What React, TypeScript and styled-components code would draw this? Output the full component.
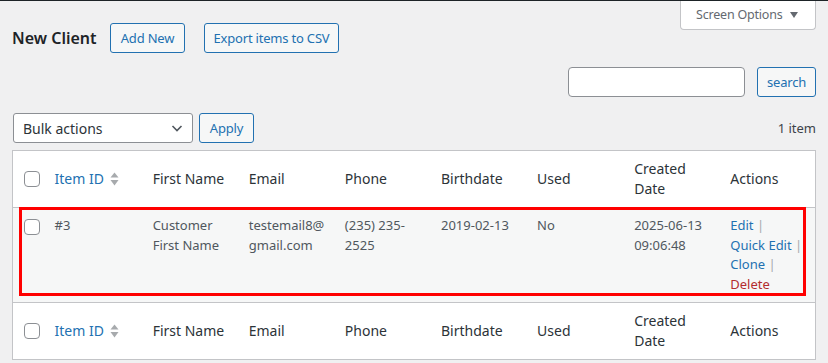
import React from "react";
import styled, { createGlobalStyle } from "styled-components";

const GlobalStyle = createGlobalStyle`
  html, body {
    margin: 0;
    padding: 0;
    background: #f0f0f1;
  }
  body {
    font-family: "Noto Sans", "Open Sans", sans-serif;
    font-size: 13px;
    color: #3c434a;
  }
`;

const TopEdge = styled.div`
  height: 1px;
  background: #1d2327;
`;

const Wrap = styled.div`
  padding: 0 12px;
`;

const HeaderRow = styled.div`
  display: flex;
  justify-content: space-between;
  align-items: flex-start;
`;

const TitleGroup = styled.div`
  display: flex;
  align-items: center;
  margin-top: 22px;
`;

const Title = styled.h1`
  width: 98px;
  margin: 0;
  font-size: 16px;
  font-weight: 600;
  color: #1d2327;
`;

const Button = styled.button<{ $gap?: number; $w: number }>`
  box-sizing: border-box;
  width: ${p => p.$w}px;
  height: 30px;
  margin-left: ${p => p.$gap || 0}px;
  padding: 0;
  border: 1px solid #2271b1;
  border-radius: 3px;
  background: #f6f7f7;
  color: #2271b1;
  font-family: inherit;
  font-size: 13px;
  line-height: 28px;
  letter-spacing: -0.2px;
  text-align: center;
  white-space: nowrap;
`;

const ScreenOptions = styled.div`
  box-sizing: border-box;
  display: flex;
  align-items: center;
  gap: 7px;
  width: 136px;
  height: 29px;
  padding: 0 0 2px 15px;
  background: #fff;
  border: 1px solid #c3c4c7;
  border-top: none;
  border-radius: 0 0 4px 4px;
  color: #646970;
  font-size: 12.5px;
  letter-spacing: -0.2px;
`;

const Caret = styled.span`
  width: 0;
  height: 0;
  border-left: 4px solid transparent;
  border-right: 4px solid transparent;
  border-top: 6px solid #646970;
  margin-top: 1px;
`;

const SearchRow = styled.div`
  display: flex;
  justify-content: flex-end;
  gap: 12px;
  margin-top: 14px;
`;

const SearchInput = styled.input`
  box-sizing: border-box;
  width: 177px;
  height: 30px;
  border: 1px solid #8c8f94;
  border-radius: 4px;
  background: #fff;
`;

const Tablenav = styled.div`
  display: flex;
  align-items: center;
  margin-top: 16px;
  margin-left: 1px;
`;

const Select = styled.div`
  box-sizing: border-box;
  display: flex;
  align-items: center;
  justify-content: space-between;
  width: 180px;
  height: 30px;
  padding: 0 8px 0 9px;
  border: 1px solid #8c8f94;
  border-radius: 3px;
  background: #fff;
  color: #2c3338;
  font-size: 14px;
`;

const Count = styled.span`
  margin-left: auto;
  color: #3c434a;
  font-size: 13px;
`;

const TableBox = styled.div`
  position: relative;
  margin-top: 7px;
`;

const Table = styled.table`
  width: 100%;
  table-layout: fixed;
  border-collapse: collapse;
  border: 1px solid #c3c4c7;
  background: #fff;
`;

const Th = styled.th<{ $link?: boolean }>`
  padding: 8px 10px;
  text-align: left;
  vertical-align: middle;
  font-size: 14px;
  font-weight: 400;
  line-height: 20px;
  color: ${p => (p.$link ? "#2271b1" : "#2c3338")};
`;

const HeadRow = styled.tr<{ $foot?: boolean }>`
  ${p =>
    p.$foot
      ? "border-top: 1px solid #c3c4c7;"
      : "border-bottom: 1px solid #c3c4c7;"}
`;

const BodyRow = styled.tr`
  background: #f6f7f7;
`;

const Td = styled.td`
  padding: 8px 10px;
  vertical-align: top;
  font-size: 13px;
  line-height: 19.5px;
  color: #50575e;
`;

const CheckCell = styled.td<{ $head?: boolean }>`
  padding: ${p => (p.$head ? "0 0 0 11px" : "11px 0 0 11px")};
  vertical-align: ${p => (p.$head ? "middle" : "top")};
`;

const Checkbox = styled.span`
  display: block;
  box-sizing: border-box;
  width: 16px;
  height: 16px;
  border: 1px solid #8c8f94;
  border-radius: 4px;
  background: #fff;
`;

const SortLabel = styled.span`
  display: inline-flex;
  align-items: center;
  gap: 6px;
`;

const Action = styled.span<{ $danger?: boolean }>`
  display: block;
  color: ${p => (p.$danger ? "#b32d2e" : "#2271b1")};
`;

const Sep = styled.span`
  color: #a7aaad;
`;

const Highlight = styled.div`
  position: absolute;
  left: 7px;
  top: 57px;
  width: 787px;
  height: 89px;
  box-sizing: border-box;
  border: 3px solid #ff0000;
  pointer-events: none;
`;

const SortIcon = () => (
  <svg width="9" height="15" viewBox="0 0 9 15">
    <path d="M4.5 0.5 L8.5 5.5 L0.5 5.5 Z" fill="#a7aaad" />
    <path d="M0.5 8 L8.5 8 L4.5 13.5 Z" fill="#a7aaad" />
  </svg>
);

const Chevron = () => (
  <svg width="14" height="14" viewBox="0 0 14 14">
    <path d="M2.5 5 L7 9.5 L11.5 5" fill="none" stroke="#50575e" strokeWidth="1.6" />
  </svg>
);

const widths = [32, 98, 96, 96, 96, 96, 97, 96, 95];

const HeaderCells = () => (
  <>
    <CheckCell as="th" $head>
      <Checkbox />
    </CheckCell>
    <Th $link>
      <SortLabel>
        Item ID <SortIcon />
      </SortLabel>
    </Th>
    <Th>First Name</Th>
    <Th>Email</Th>
    <Th>Phone</Th>
    <Th>Birthdate</Th>
    <Th>Used</Th>
    <Th>Created Date</Th>
    <Th>Actions</Th>
  </>
);

export default function App() {
  return (
    <>
      <GlobalStyle />
      <TopEdge />
      <Wrap>
        <HeaderRow>
          <TitleGroup>
            <Title>New Client</Title>
            <Button $w={75}>Add New</Button>
            <Button $w={135} $gap={19}>
              Export items to CSV
            </Button>
          </TitleGroup>
          <ScreenOptions>
            Screen Options <Caret />
          </ScreenOptions>
        </HeaderRow>

        <SearchRow>
          <SearchInput type="search" />
          <Button $w={59}>search</Button>
        </SearchRow>

        <Tablenav>
          <Select>
            Bulk actions <Chevron />
          </Select>
          <Button $w={55} $gap={6}>
            Apply
          </Button>
          <Count>1 item</Count>
        </Tablenav>

        <TableBox>
          <Table>
            <colgroup>
              {widths.map((w, i) => (
                <col key={i} style={{ width: w }} />
              ))}
            </colgroup>
            <thead>
              <HeadRow>
                <HeaderCells />
              </HeadRow>
            </thead>
            <tbody>
              <BodyRow>
                <CheckCell>
                  <Checkbox />
                </CheckCell>
                <Td>#3</Td>
                <Td>Customer First Name</Td>
                <Td>
                  testemail8@
                  <br />
                  gmail.com
                </Td>
                <Td>(235) 235-2525</Td>
                <Td>2019-02-13</Td>
                <Td>No</Td>
                <Td>2025-06-13 09:06:48</Td>
                <Td>
                  <Action>
                    Edit <Sep>|</Sep>
                  </Action>
                  <Action>
                    Quick Edit <Sep>|</Sep>
                  </Action>
                  <Action>
                    Clone <Sep>|</Sep>
                  </Action>
                  <Action $danger>Delete</Action>
                </Td>
              </BodyRow>
            </tbody>
            <tfoot>
              <HeadRow $foot>
                <HeaderCells />
              </HeadRow>
            </tfoot>
          </Table>
          <Highlight />
        </TableBox>
      </Wrap>
    </>
  );
}
